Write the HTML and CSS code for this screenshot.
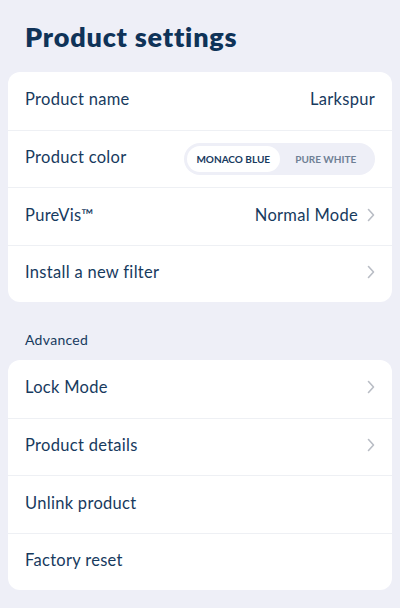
FILE: index.html
```html
<!DOCTYPE html>
<html>
<head>
    <title>Product settings</title>
    <link rel="stylesheet" href="styles.css">
</head>
<body>
    <h1 class="title">Product settings</h1>

    <div class="card">
        <div class="row">
            <span class="label">Product name</span>
            <span class="value">Larkspur</span>
        </div>
        <div class="row">
            <span class="label">Product color</span>
            <div class="toggle">
                <span class="option selected">MONACO BLUE</span>
                <span class="option">PURE WHITE</span>
            </div>
        </div>
        <div class="row">
            <span class="label">PureVis™</span>
            <span class="value">Normal Mode <svg class="chevron" viewBox="0 0 8 14"><path d="M1.5 1.5 L6.5 7 L1.5 12.5"/></svg></span>
        </div>
        <div class="row">
            <span class="label">Install a new filter</span>
            <svg class="chevron" viewBox="0 0 8 14"><path d="M1.5 1.5 L6.5 7 L1.5 12.5"/></svg>
        </div>
    </div>

    <h2 class="section">Advanced</h2>

    <div class="card">
        <div class="row">
            <span class="label">Lock Mode</span>
            <svg class="chevron" viewBox="0 0 8 14"><path d="M1.5 1.5 L6.5 7 L1.5 12.5"/></svg>
        </div>
        <div class="row">
            <span class="label">Product details</span>
            <svg class="chevron" viewBox="0 0 8 14"><path d="M1.5 1.5 L6.5 7 L1.5 12.5"/></svg>
        </div>
        <div class="row">
            <span class="label">Unlink product</span>
        </div>
        <div class="row">
            <span class="label">Factory reset</span>
        </div>
    </div>
</body>
</html>
```

FILE: styles.css
```css
body {
    margin: 0; padding: 0 8px;
    background-color: #eeeff7;
    font-family: Lato, "Noto Sans", sans-serif;
    color: #173a5e;
}
.title {
    margin: 0; padding: 19px 17px 18px;
    font-size: 27px; font-weight: 800; line-height: 35px;
    letter-spacing: 0.8px;
    color: #0f3358;
}
.card { background-color: white; border-radius: 12px; }
.row {
    display: flex; align-items: center; justify-content: space-between;
    box-sizing: border-box; height: 57.5px; padding: 0 17px 3px;
    border-top: 1px solid #eef0f4;
    font-size: 16.5px; letter-spacing: 0.3px;
}
.row:first-child { border-top: none; }
.value { display: flex; align-items: center; gap: 9px; }
.chevron {
    width: 8px; height: 14px;
    fill: none; stroke: #b9bdc5; stroke-width: 1.6;
    stroke-linecap: round; stroke-linejoin: round;
}
.toggle {
    display: flex; align-items: center;
    width: 185px; height: 26px; padding: 3px;
    margin-bottom: -3px;
    background-color: #eeeff7; border-radius: 16px;
    letter-spacing: 0;
}
.option {
    flex: 1; text-align: center; line-height: 26px;
    font-size: 10px; font-weight: 700; color: #6e7f95;
}
.option.selected {
    background-color: white; border-radius: 13px; color: #173a5e;
}
.section {
    margin: 0; padding: 29px 17px 12px;
    font-size: 14px; font-weight: 400; line-height: 17px;
    letter-spacing: 0.3px;
}
```
